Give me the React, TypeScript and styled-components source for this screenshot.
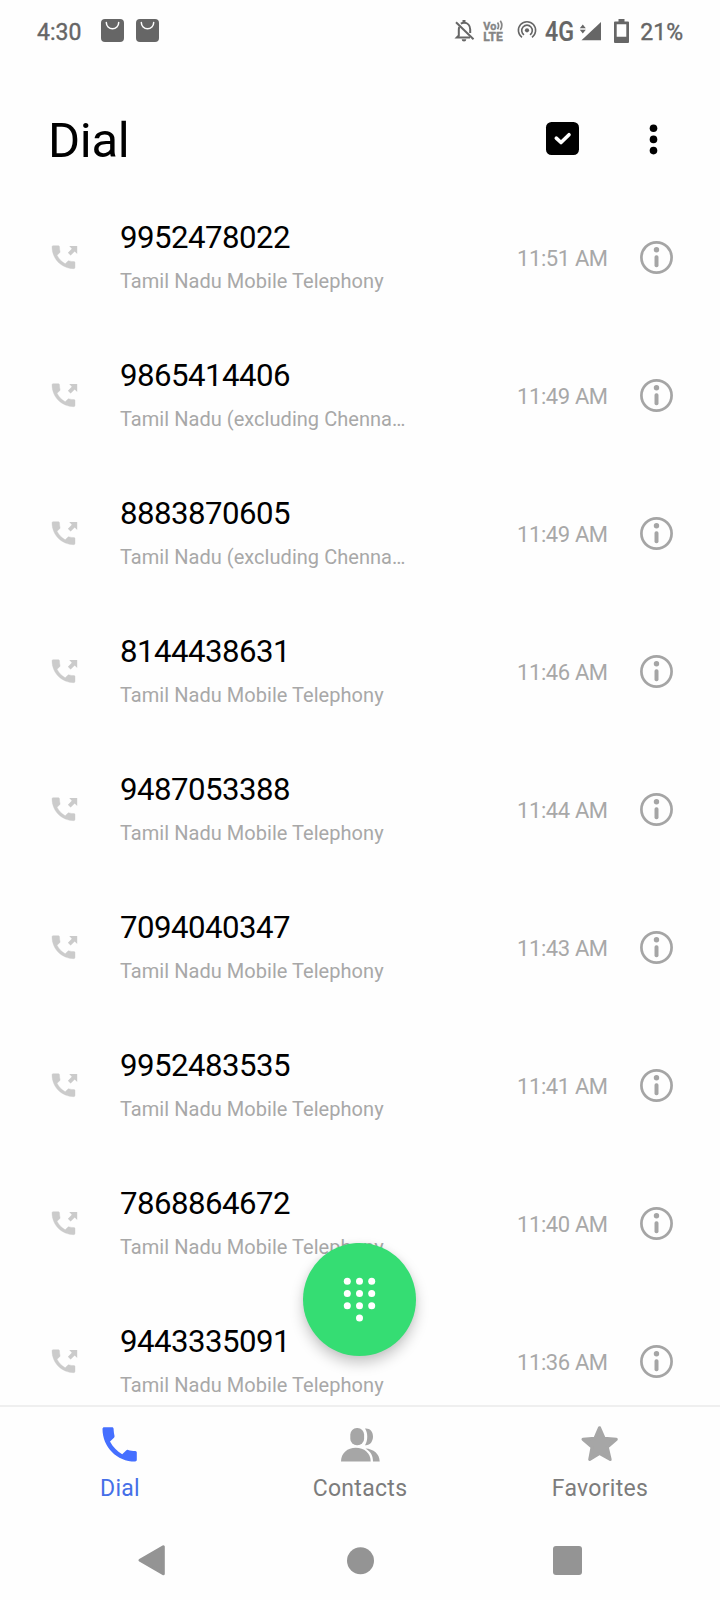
import React from "react";
import styled, { createGlobalStyle } from "styled-components";

const GlobalStyle = createGlobalStyle`
  * { box-sizing: border-box; }
  body { margin: 0; background: #fefefe; }
`;

const Screen = styled.div`
  position: relative;
  display: flex;
  flex-direction: column;
  width: 720px;
  height: 1600px;
  overflow: hidden;
  background: #fefefe;
  font-family: Roboto, "Liberation Sans", sans-serif;
  svg { display: block; flex: none; overflow: visible; }
`;

const StatusBar = styled.header`
  display: flex;
  align-items: center;
  justify-content: space-between;
  height: 62px;
  padding: 0 37px;
  color: #666;
`;

const StatusGroup = styled.div`
  display: flex;
  align-items: center;
`;

const StatusText = styled.span<{ $ml?: number }>`
  font-size: 23px;
  font-weight: 400;
  -webkit-text-stroke: 0.4px #666;
  line-height: 28px;
  margin-left: ${(p) => p.$ml ?? 0}px;
  padding-top: 3px;
`;

const StatusIcon = styled.svg<{ $ml: number }>`
  margin-left: ${(p) => p.$ml}px;
`;

const TitleBar = styled.div`
  display: flex;
  align-items: center;
  height: 126px;
  padding: 37px 48px 11px 48px;
`;

const Title = styled.h1`
  flex: 1;
  margin: 0;
  font-size: 49px;
  font-weight: 400;
  line-height: 75px;
  letter-spacing: -0.3px;
  color: #000;
  padding-top: 5px;
`;

const IconButton = styled.button<{ $ml?: number }>`
  display: flex;
  padding: 0;
  margin-left: ${(p) => p.$ml ?? 0}px;
  border: 0;
  background: none;
`;

const CallList = styled.ul`
  flex: none;
  height: 1217px;
  margin: 0;
  padding: 0;
  overflow: hidden;
  list-style: none;
`;

const CallRow = styled.li`
  display: flex;
  align-items: center;
  height: 138px;
  padding: 0 47px 0 52px;
`;

const Caller = styled.div`
  flex: 1;
  display: flex;
  flex-direction: column;
  margin-left: 42px;
  padding-top: 4px;
`;

const PhoneNumber = styled.span`
  padding-top: 1px;
  margin-bottom: -1px;
  font-size: 31.2px;
  line-height: 44px;
  letter-spacing: -0.52px;
  color: #000;
`;

const Region = styled.span`
  font-size: 20px;
  line-height: 44px;
  letter-spacing: 0.04px;
  color: #a8a8a8;
`;

const CallTime = styled.time`
  margin-right: 32.3px;
  font-size: 22px;
  line-height: 30px;
  letter-spacing: -0.38px;
  padding-top: 3px;
  color: #a8a8a8;
`;

const DialPadButton = styled.button`
  position: absolute;
  left: 303px;
  top: 1243px;
  width: 113px;
  height: 113px;
  padding: 0;
  border: 0;
  border-radius: 50%;
  background: #35dd73;
  box-shadow: 0 7px 14px rgba(0, 0, 0, 0.22), 0 0 6px rgba(0, 0, 0, 0.05);
`;

const TabBar = styled.nav`
  display: grid;
  grid-template-columns: repeat(3, 1fr);
  height: 115px;
  border-top: 2px solid #efefef;
  background: #fefefe;
`;

const Tab = styled.a<{ $active?: boolean }>`
  display: flex;
  flex-direction: column;
  align-items: center;
  padding-top: 18px;
  color: ${(p) => (p.$active ? "#456fff" : "#a6a6a6")};
`;

const TabLabel = styled.span<{ $active?: boolean }>`
  margin-top: 11px;
  font-size: 23px;
  line-height: 30px;
  letter-spacing: 0.3px;
  color: ${(p) => (p.$active ? "#456fe8" : "#7c7c7c")};
`;

const SystemNav = styled.footer`
  display: flex;
  align-items: center;
  justify-content: space-between;
  height: 80px;
  padding: 0 138px;
`;

const calls: [string, string, string][] = [
  ["9952478022", "Tamil Nadu Mobile Telephony", "11:51 AM"],
  ["9865414406", "Tamil Nadu (excluding Chenna…", "11:49 AM"],
  ["8883870605", "Tamil Nadu (excluding Chenna…", "11:49 AM"],
  ["8144438631", "Tamil Nadu Mobile Telephony", "11:46 AM"],
  ["9487053388", "Tamil Nadu Mobile Telephony", "11:44 AM"],
  ["7094040347", "Tamil Nadu Mobile Telephony", "11:43 AM"],
  ["9952483535", "Tamil Nadu Mobile Telephony", "11:41 AM"],
  ["7868864672", "Tamil Nadu Mobile Telephony", "11:40 AM"],
  ["9443335091", "Tamil Nadu Mobile Telephony", "11:36 AM"],
];

const BagIcon = ({ ml }: { ml: number }) => (
  <StatusIcon $ml={ml} width="23" height="24" viewBox="0 0 23 24">
    <rect width="23" height="23" rx="4" fill="#666" />
    <path d="M5.3 3.6a6.2 6.2 0 0 0 12.4 0" fill="none" stroke="#fefefe" strokeWidth="1.5" strokeLinecap="round" />
  </StatusIcon>
);

const BellOffIcon = () => (
  <StatusIcon $ml={0} width="20" height="22" viewBox="0 0 20 22" fill="none" stroke="#666" strokeWidth="2">
    <path d="M1 2.200 18.500 19.200" />
    <path d="M4.300 7C3.800 8 3.800 9 3.800 10v5.500L1.800 17.600H15" />
    <path d="M5.800 3.600C7 3 8 2.800 9 2.800c3.600 0 6.200 2.800 6.200 6.800v3.400" />
    <path d="M9 0v3" strokeWidth="3" />
    <path d="M6.700 19.200h4.600a2.300 2.300 0 0 1-4.600 0z" fill="#666" stroke="none" />
  </StatusIcon>
);

const VolteIcon = () => (
  <StatusIcon $ml={8} width="22" height="22" viewBox="0 0 22 22" fill="#858585" stroke="#858585" strokeWidth="0.4" fontFamily="Roboto, sans-serif" fontWeight="700">
    <text x="0.3" y="9.800" fontSize="11.500" textLength="13" lengthAdjust="spacingAndGlyphs">Vo</text>
    <path d="M14.500 2.500q2.200 3 0 6.800M17.300 0.800q3.200 4.600 0 9.200" fill="none" strokeWidth="1.700" />
    <text x="0.3" y="21.400" fontSize="12.700" textLength="19.500" lengthAdjust="spacingAndGlyphs">LTE</text>
  </StatusIcon>
);

const HotspotIcon = () => (
  <StatusIcon $ml={12} width="20" height="22" viewBox="0 0 20 22" fill="none" stroke="#666" strokeWidth="1.600">
    <circle cx="10" cy="10.300" r="2.100" fill="#666" stroke="none" />
    <path d="M7 14.800a5.300 5.300 0 1 1 6 0" />
    <path d="M5 17.300a8.600 8.600 0 1 1 10 0" />
  </StatusIcon>
);

const NetworkIcon = () => (
  <StatusIcon $ml={8} width="58" height="24" viewBox="0 0 58 24" fill="#666">
    <text x="0" y="21.600" fontFamily="Roboto, sans-serif" fontWeight="500" fontSize="27.500" textLength="29" lengthAdjust="spacingAndGlyphs" stroke="#666" strokeWidth="0.2">4G</text>
    <path d="M37.800 5.500 40.800 9.200h-6zM37.800 14.500 40.800 10.800h-6z" />
    <path d="M36.500 21.300H56V3z" />
  </StatusIcon>
);

const BatteryIcon = () => (
  <StatusIcon $ml={11} width="16" height="24" viewBox="0 0 16 24">
    <path fillRule="evenodd" fill="#666" d="M4.500 0h6v2.500H14a1 1 0 0 1 1 1v19.500a1 1 0 0 1-1 1H1a1 1 0 0 1-1-1V3.500a1 1 0 0 1 1-1h3.500zM2.700 5.200v12.600h9.600V5.200z" />
  </StatusIcon>
);

const HandsetPath =
  "M0 1.700C0 .7.700 0 1.700 0H9.500C10.500 0 11 .7 11.100 1.500 11.200 4.500 11.600 6.500 12 8.500 12.200 9.300 12 10 11.500 10.500L7.500 14.300C10.500 20 14.500 24 19.700 27L23.600 23.300C24.200 22.700 24.900 22.500 25.600 22.700 28 23.300 30 23.600 32.800 23.700 33.700 23.800 34.300 24.500 34.300 25.300V32.600C34.300 33.600 33.600 34.300 32.600 34.300 14.500 34.300 0 19.800 0 1.700Z";

const OutgoingIcon = () => (
  <svg width="26" height="24" viewBox="0 0 26 24" fill="#cbcbcb">
    <path d={HandsetPath} transform="translate(0 0.700) scale(0.67)" stroke="#cbcbcb" strokeWidth="0.6" />
    <path d="M17.200 1H25.200V9L22.700 6.600 18.600 10.600 15.900 7.800 19.800 3.800z" />
  </svg>
);

const InfoIcon = () => (
  <svg width="33" height="33" viewBox="0 0 33 33" fill="#a5a5a5">
    <circle cx="16.500" cy="16.500" r="15.100" fill="none" stroke="#a5a5a5" strokeWidth="2.700" />
    <circle cx="16.500" cy="8.700" r="2.700" />
    <rect x="14.500" y="14.300" width="4" height="12" rx="1.800" />
  </svg>
);

export default function App() {
  return (
    <>
      <GlobalStyle />
      <Screen>
        <StatusBar>
          <StatusGroup>
            <StatusText>4:30</StatusText>
            <BagIcon ml={20} />
            <BagIcon ml={12} />
          </StatusGroup>
          <StatusGroup>
            <BellOffIcon />
            <VolteIcon />
            <HotspotIcon />
            <NetworkIcon />
            <BatteryIcon />
            <StatusText $ml={10}>21%</StatusText>
          </StatusGroup>
        </StatusBar>

        <TitleBar>
          <Title>Dial</Title>
          <IconButton aria-label="Select">
            <svg width="33" height="33" viewBox="0 0 33 33">
              <rect width="33" height="33" rx="5.500" fill="#000" />
              <path d="M10.300 16.200 15 20.500 23 12.700" fill="none" stroke="#fff" strokeWidth="3.600" strokeLinecap="round" strokeLinejoin="round" />
            </svg>
          </IconButton>
          <IconButton $ml={70} aria-label="More options">
            <svg width="23" height="33" viewBox="0 0 23 33">
              <circle cx="4.500" cy="6.200" r="3.800" />
              <circle cx="4.500" cy="17.400" r="3.800" />
              <circle cx="4.500" cy="28.600" r="3.800" />
            </svg>
          </IconButton>
        </TitleBar>

        <CallList>
          {calls.map(([number, region, time]) => (
            <CallRow key={number}>
              <OutgoingIcon />
              <Caller>
                <PhoneNumber>{number}</PhoneNumber>
                <Region>{region}</Region>
              </Caller>
              <CallTime>{time}</CallTime>
              <InfoIcon />
            </CallRow>
          ))}
        </CallList>

        <TabBar>
          <Tab $active>
            <svg width="38" height="38" viewBox="0 0 38 38" fill="currentColor">
              <path d={HandsetPath} transform="translate(1.500 2.200)" />
            </svg>
            <TabLabel $active>Dial</TabLabel>
          </Tab>
          <Tab>
            <svg width="40" height="38" viewBox="0 0 40 38" fill="currentColor">
              <rect x="10.300" y="3" width="13.800" height="17.300" rx="6.600" />
              <path d="M25 3.500C30 3 33 6.500 33 11.500S30 20.700 25 20.200C28 15.500 28 8 25 3.500Z" />
              <path d="M1 36.500C1 28 7.500 22.800 15.800 22.800S30.700 28 30.700 36.500Z" />
              <path d="M25.500 23.600C33.500 24 39.700 29 39.700 36.500H33C33 30.500 30.500 26.500 25.500 23.600Z" />
            </svg>
            <TabLabel>Contacts</TabLabel>
          </Tab>
          <Tab>
            <svg width="38" height="38" viewBox="0 0 38 38" fill="currentColor" stroke="currentColor" strokeWidth="3" strokeLinejoin="round">
              <path d="M18.500 2.700 23.200 13.300 35.300 14.300 26.300 22.200 29.200 34.500 18.500 28.400 8.700 34.500 11 22.200 2 14.300 13.900 13.300Z" />
            </svg>
            <TabLabel>Favorites</TabLabel>
          </Tab>
        </TabBar>

        <SystemNav>
          <svg width="30" height="32" viewBox="0 0 30 32" fill="#949494" stroke="#949494" strokeWidth="3" strokeLinejoin="round">
            <path d="M25.300 2.800V29.800L2 16.300Z" />
          </svg>
          <svg width="27" height="27" viewBox="0 0 27 27" fill="#949494">
            <circle cx="13.500" cy="13.800" r="13.500" />
          </svg>
          <svg width="29" height="29" viewBox="0 0 29 29" fill="#949494">
            <rect width="29" height="29" rx="3" />
          </svg>
        </SystemNav>

        <DialPadButton aria-label="Dial pad">
          <svg width="113" height="113" viewBox="0 0 113 113" fill="#fff">
            {[38.2, 50.4, 62.7].map((y) =>
              [44.3, 56.5, 68.7].map((x) => <circle key={`${x}-${y}`} cx={x} cy={y} r="3.500" />)
            )}
            <circle cx="56.500" cy="74.900" r="3.500" />
          </svg>
        </DialPadButton>
      </Screen>
    </>
  );
}
